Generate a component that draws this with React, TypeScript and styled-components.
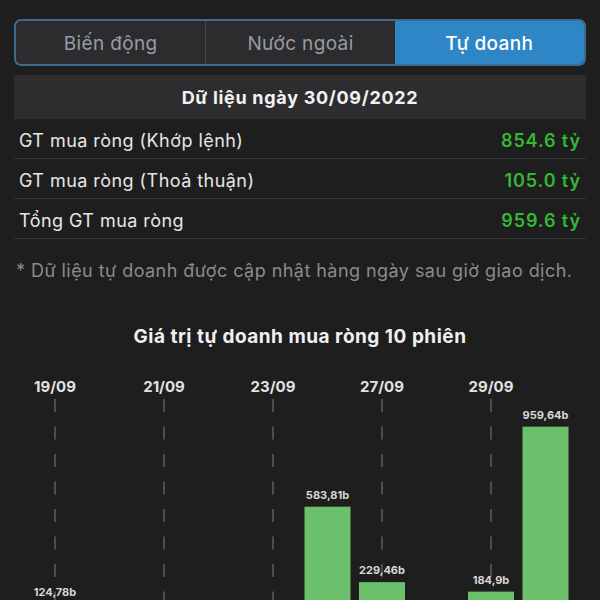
import React from "react";
import styled, { createGlobalStyle } from "styled-components";

const GlobalStyle = createGlobalStyle`
  html, body { margin: 0; padding: 0; background: #1e1e1f; }
  body { font-family: "Inter", "Noto Sans", sans-serif; color: #e8e8e8; }
  * { box-sizing: border-box; }
`;

const Page = styled.div`
  width: 600px;
  height: 600px;
  overflow: hidden;
  padding-top: 19px;
  background: #1e1e1f;
`;

const Section = styled.div`
  margin: 0 14px;
`;

const Segmented = styled.div`
  display: grid;
  grid-template-columns: repeat(3, 1fr);
  height: 47px;
  border: 2px solid #3d6b8e;
  border-radius: 7px;
  overflow: hidden;
  background: #2c2c2e;
`;

const Tab = styled.div<{ $active?: boolean; $divider?: boolean }>`
  display: flex;
  align-items: center;
  justify-content: center;
  padding-top: 1px;
  font-size: 19px;
  letter-spacing: 0.35px;
  font-weight: ${(p) => (p.$active ? 500 : 400)};
  color: ${(p) => (p.$active ? "#ffffff" : "#959ca3")};
  background: ${(p) => (p.$active ? "#2f86c7" : "transparent")};
  border-left: ${(p) => (p.$divider ? "1px solid #46484b" : "none")};
`;

const Band = styled.div`
  margin-top: 9px;
  height: 44px;
  background: #2d2d2f;
  display: flex;
  align-items: center;
  justify-content: center;
  font-size: 18px;
  letter-spacing: 0.7px;
  font-weight: 700;
  color: #f2f2f2;
`;

const Row = styled.div`
  height: 40px;
  display: flex;
  align-items: center;
  justify-content: space-between;
  padding: 3px 5px 0 5px;
  border-bottom: 1px solid #343436;
`;

const Label = styled.span`
  font-size: 18px;
  letter-spacing: 0.45px;
  color: #e6e6e6;
`;

const Value = styled.span`
  font-size: 18px;
  letter-spacing: 0.9px;
  font-weight: 600;
  color: #34b834;
`;

const Note = styled.div`
  margin: 21px 14px 0 16px;
  line-height: 22px;
  font-size: 18px;
  letter-spacing: 0.45px;
  color: #8b8b8d;
  white-space: nowrap;
`;

const ChartTitle = styled.div`
  margin-top: 43px;
  line-height: 24px;
  text-align: center;
  font-size: 19px;
  letter-spacing: 0.5px;
  font-weight: 700;
  color: #f0f0f0;
`;

const Chart = styled.svg`
  display: block;
  margin-top: 12px;
  width: 600px;
  height: 240px;
`;

const rows = [
  { label: "GT mua ròng (Khớp lệnh)", value: "854.6 tỷ" },
  { label: "GT mua ròng (Thoả thuận)", value: "105.0 tỷ" },
  { label: "Tổng GT mua ròng", value: "959.6 tỷ" },
];

const sessions: { date: string; value: number | null; label?: string }[] = [
  { date: "19/09", value: 124.78, label: "124,78b" },
  { date: "20/09", value: null },
  { date: "21/09", value: null },
  { date: "22/09", value: null },
  { date: "23/09", value: null },
  { date: "26/09", value: 583.81, label: "583,81b" },
  { date: "27/09", value: 229.46, label: "229,46b" },
  { date: "28/09", value: null },
  { date: "29/09", value: 184.9, label: "184,9b" },
  { date: "30/09", value: 959.64, label: "959,64b" },
];

const BASE = 630;
const SCALE = 0.2129;
const cx = (i: number) => 55 + i * 54.5;

export default function App() {
  return (
    <>
      <GlobalStyle />
      <Page>
        <Section>
          <Segmented>
            <Tab>Biến động</Tab>
            <Tab $divider>Nước ngoài</Tab>
            <Tab $active>Tự doanh</Tab>
          </Segmented>
          <Band>Dữ liệu ngày 30/09/2022</Band>
          {rows.map((r) => (
            <Row key={r.label}>
              <Label>{r.label}</Label>
              <Value>{r.value}</Value>
            </Row>
          ))}
        </Section>
        <Note>* Dữ liệu tự doanh được cập nhật hàng ngày sau giờ giao dịch.</Note>
        <ChartTitle>Giá trị tự doanh mua ròng 10 phiên</ChartTitle>
        <Chart viewBox="0 360 600 240">
          {sessions.map((s, i) =>
            i % 2 === 0 ? (
              <g key={"l" + i}>
                <text
                  x={cx(i)}
                  y={390.5}
                  textAnchor="middle"
                  fontFamily="Inter, sans-serif"
                  fontSize="15"
                  fontWeight="700"
                  fill="#e2e2e2"
                >
                  {s.date}
                </text>
                <line
                  x1={cx(i)}
                  x2={cx(i)}
                  y1={398}
                  y2={640}
                  stroke="#5e5e60"
                  strokeWidth="1.5"
                  strokeDasharray="13 14.5"
                />
              </g>
            ) : null
          )}
          {sessions.map((s, i) => {
            if (s.value === null) return null;
            const top = BASE - s.value * SCALE;
            return (
              <g key={"b" + i}>
                <rect x={cx(i) - 23} y={top} width={46} height={BASE - top} fill="#6cc06b" />
                <text
                  x={cx(i)}
                  y={top - 8}
                  textAnchor="middle"
                  fontFamily="Inter, sans-serif"
                  fontSize="11"
                  fontWeight="700"
                  fill="#d8d8d8"
                >
                  {s.label}
                </text>
              </g>
            );
          })}
        </Chart>
      </Page>
    </>
  );
}
